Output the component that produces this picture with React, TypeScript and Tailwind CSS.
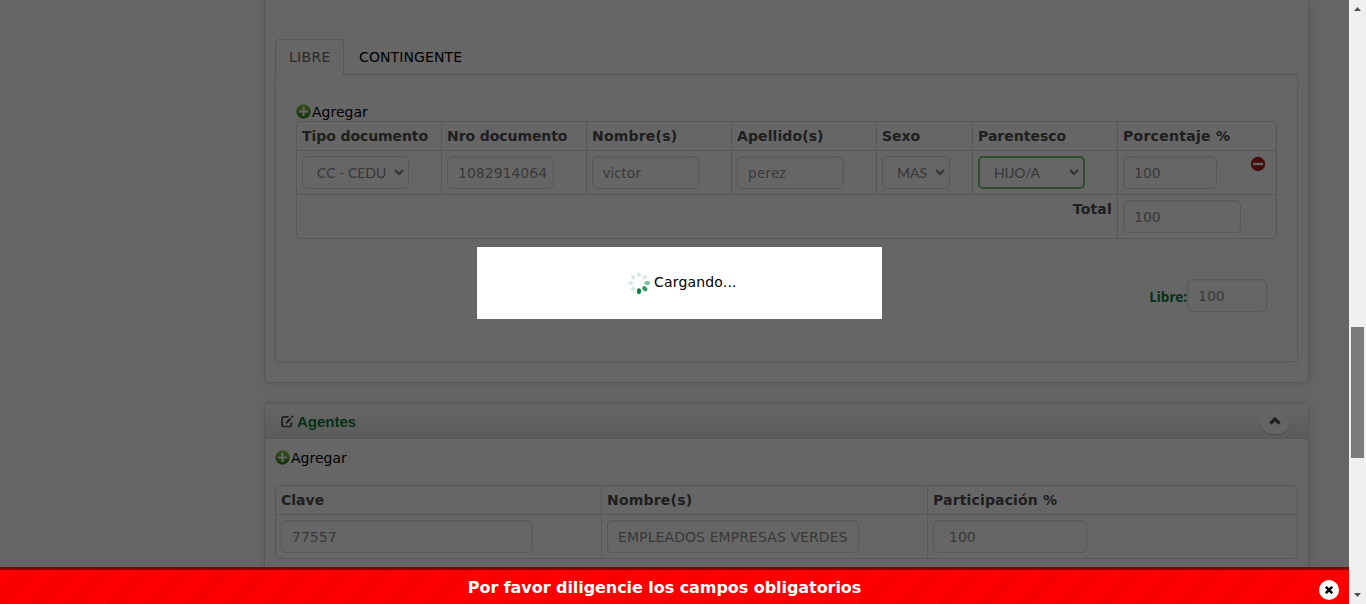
import React from "react";

const inputBase =
  "flex h-[33px] items-center overflow-hidden whitespace-nowrap rounded-[5px] border border-[#dcdcdc] bg-white text-[14px] text-[#8f8f8f] shadow-[inset_0_1px_2px_rgba(0,0,0,0.09)]";

function Field({ value, className = "", textClass = "pt-[2px]" }: { value: string; className?: string; textClass?: string }) {
  return (
    <div className={`${inputBase} ${className}`}>
      <span className={textClass}>{value}</span>
    </div>
  );
}

function Select({ value, className = "", textClass = "" }: { value: string; className?: string; textClass?: string }) {
  return (
    <div
      className={`flex h-[33px] items-center justify-between overflow-hidden whitespace-nowrap rounded-[5px] bg-white pl-[14px] pr-1 font-['Lato',sans-serif] text-[14px] text-[#8a8a8a] ${className}`}
    >
      <span className={textClass}>{value}</span>
      <svg width="10" height="7" viewBox="0 0 10 7" fill="none" stroke="#808080" strokeWidth="2" className="-mt-px">
        <path d="M1 1l4 4 4-4" />
      </svg>
    </div>
  );
}

function AddLink({ id }: { id: string }) {
  return (
    <div className="flex h-[18px] items-center text-[14px] text-black">
      <svg width="16" height="16" viewBox="0 0 16 16">
        <defs>
          <linearGradient id={id} x1="0" y1="0" x2="0" y2="1">
            <stop offset="0" stopColor="#8ccb4c" />
            <stop offset="1" stopColor="#287f1e" />
          </linearGradient>
        </defs>
        <circle cx="7.5" cy="7.5" r="7.2" fill={`url(#${id})`} />
        <path d="M7.5 3v9M3 7.5h9" stroke="#fff" strokeWidth="2.2" />
      </svg>
      <span>Agregar</span>
    </div>
  );
}

const head = "px-[5px] pt-[5px] text-[14px] leading-[18px] font-bold text-[#4e4e4e] whitespace-nowrap";
const line = "border-[#dcdcdc]";

const heads = [
  ["Tipo documento", "tracking-[-0.08px]"],
  ["Nro documento", "tracking-[-0.08px]"],
  ["Nombre(s)", "tracking-[0.2px]"],
  ["Apellido(s)", "tracking-[0.1px]"],
  ["Sexo", ""],
  ["Parentesco", ""],
  ["Porcentaje %", "tracking-[0.28px]"],
];

function Beneficiaries() {
  return (
    <div className={`w-[981px] rounded-[4px] border ${line}`}>
      <div className="grid grid-cols-[144px_145px_145px_145px_96px_145px_159px]">
        {heads.map(([h, t], i) => (
          <div key={h} className={`h-[28px] ${head} ${i ? "border-l" : ""} ${line}`}>
            <span className={t}>{h}</span>
          </div>
        ))}
      </div>
      <div className={`grid h-[44px] grid-cols-[144px_145px_145px_145px_96px_145px_159px] border-t ${line} [&>*]:px-[5px] [&>*]:pt-[5px]`}>
        <div>
          <Select value="CC - CEDU" className="w-[107px] border border-[#dcdcdc]" />
        </div>
        <div className={`border-l ${line}`}>
          <Field value="1082914064" className="w-[107px] pl-[10px]" />
        </div>
        <div className={`border-l ${line}`}>
          <Field value="victor" className="w-[107px] pl-[10px]" textClass="font-['Noto_Sans',sans-serif] tracking-[0.3px]" />
        </div>
        <div className={`border-l ${line}`}>
          <Field value="perez" className="w-[107px] pl-[10px]" textClass="font-['Noto_Sans',sans-serif] tracking-[0.4px]" />
        </div>
        <div className={`border-l ${line}`}>
          <Select value="MAS" className="w-[68px] border border-[#dcdcdc]" />
        </div>
        <div className={`border-l ${line}`}>
          <Select value="HIJO/A" className="w-[107px] border-2 border-[#77c377]" textClass="tracking-[-0.1px]" />
        </div>
        <div className={`flex border-l ${line}`}>
          <Field value="100" className="w-[94px] pl-[10px]" />
          <svg width="16" height="16" viewBox="0 0 16 16" className="ml-[33px]">
            <circle cx="8" cy="8" r="7.2" fill="#a91d18" />
            <path d="M3 8h10" stroke="#fff" strokeWidth="2.4" />
          </svg>
        </div>
      </div>
      <div className={`grid h-[44px] grid-cols-[820px_159px] border-t ${line}`}>
        <div className={`${head} text-right`}>
          <span className="tracking-[0.2px]">Total</span>
        </div>
        <div className={`border-l px-[5px] pt-[5px] ${line}`}>
          <Field value="100" className="w-[118px] pl-[10px]" />
        </div>
      </div>
    </div>
  );
}

function Agents() {
  return (
    <div className={`h-[74px] w-[1023px] rounded-[4px] border ${line}`}>
      <div className="grid h-[28px] grid-cols-[325px_326px_370px]">
        <div className={head}>Clave</div>
        <div className={`border-l ${line} ${head}`}>
          <span className="tracking-[0.2px]">Nombre(s)</span>
        </div>
        <div className={`border-l ${line} ${head}`}>
          <span className="tracking-[0.15px]">Participación %</span>
        </div>
      </div>
      <div className={`grid h-[44px] grid-cols-[325px_326px_370px] border-t ${line} [&>*]:px-[5px] [&>*]:pt-[5px]`}>
        <div>
          <Field value="77557" className="w-[252px] pl-[10px]" />
        </div>
        <div className={`border-l ${line}`}>
          <Field value="EMPLEADOS EMPRESAS VERDES" className="w-[252px] pl-[10px]" textClass="pt-[2px] tracking-[0.09px]" />
        </div>
        <div className={`border-l ${line}`}>
          <Field value="100" className="w-[154px] pl-[15px]" />
        </div>
      </div>
    </div>
  );
}

const petals = ["#d3eadd", "#d3eadd", "#7cc09a", "#359a62", "#128040", "#d3eadd", "#d3eadd", "#d3eadd"];

function Loading() {
  return (
    <div className="absolute left-[477px] top-[247px] flex h-[72px] w-[405px] bg-white pl-[151px] pt-[25px]">
      <svg width="22" height="22" viewBox="-11 -11 22 22">
        {petals.map((c, i) => (
          <ellipse key={i} cx="0" cy="-8.2" rx={i > 1 && i < 5 ? 2.1 : 1.9} ry={i > 1 && i < 5 ? 2.9 : 2.4} fill={c} transform={`rotate(${i * 45})`} />
        ))}
      </svg>
      <span className="ml-[4px] mt-px text-[14px] leading-[18px] tracking-[0.18px] text-black">Cargando...</span>
    </div>
  );
}

function Scrollbar() {
  return (
    <div className="flex h-full w-[17px] shrink-0 flex-col items-center bg-[#f0f0f0]">
      <svg width="17" height="17" viewBox="0 0 17 17" className="shrink-0">
        <path d="M5 11h7L8.5 7z" fill="#505050" />
      </svg>
      <div className="mt-[310px] h-[131px] w-[13px] bg-[#7b7b7b]" />
      <svg width="17" height="17" viewBox="0 0 17 17" className="mt-auto shrink-0">
        <path d="M5 6h7L8.5 10z" fill="#505050" />
      </svg>
    </div>
  );
}

export default function App() {
  return (
    <div className="flex h-[604px] w-[1366px] overflow-hidden bg-[#fcfcfc] font-[Verdana,'DejaVu_Sans',sans-serif]">
      <div className="relative h-full w-[1349px] shrink-0 overflow-hidden">
        <div className="flex w-full flex-col pl-[264px]">
          <section className="h-[383px] w-[1045px] rounded-b-[4px] border border-t-0 border-[#d9d9d9] bg-white pl-[10px] pt-[39px] shadow-[0_0_10px_rgba(0,0,0,0.1)]">
            <div className="flex h-[36px] w-[1023px]">
              <div className="flex w-[69px] items-center rounded-t-[4px] border border-b-0 border-[#dcdcdc] pl-[13px] text-[14px] tracking-[0.3px] text-[#6c6c6c]">
                LIBRE
              </div>
              <div className="flex flex-1 items-center border-b border-[#dcdcdc] pl-[15px] pt-[2px] text-[14px] tracking-[0.1px] text-black">
                CONTINGENTE
              </div>
            </div>
            <div className="h-[287px] w-[1023px] rounded-b-[4px] border border-t-0 border-[#dcdcdc] pl-[20px] pt-[28px] shadow-[0_3px_5px_rgba(0,0,0,0.05)]">
              <AddLink id="addBeneficiary" />
              <Beneficiaries />
              <div className="mt-[40px] flex w-[971px] items-center justify-end">
                <span className="pt-[3px] font-['Noto_Sans',sans-serif] text-[13.5px] font-bold text-[#0c7a3a]">Libre:</span>
                <Field value="100" className="w-[80px] pl-[10px]" />
              </div>
            </div>
          </section>

          <section className="mt-[20px] h-[260px] w-[1045px] rounded-t-[4px] border border-[#d9d9d9] bg-white shadow-[0_0_10px_rgba(0,0,0,0.1)]">
            <header className="flex h-[35px] items-center border-b border-[#dcdcdc] bg-linear-to-b from-white to-[#e4e4e4] pl-[16px] pr-[18px]">
              <svg width="13" height="13" viewBox="0 0 13 13" fill="none" stroke="#4a4a4a">
                <path d="M7.5 1.9H3.2Q1 1.9 1 4v5.4q0 2.1 2.2 2.1h5q2.2 0 2.2-2.1V7.6" strokeWidth="1.7" />
                <path d="M5 8.2L9.6 3.4" strokeWidth="2" />
                <path d="M10.6 2.4l1.4-1.4" strokeWidth="2" />
              </svg>
              <h2 className="ml-[3px] flex-1 pt-[2px] font-['Liberation_Sans',sans-serif] text-[15px] font-bold text-[#0c7a3a]">Agentes</h2>
              <div className="flex h-[25px] w-[30px] items-center justify-center rounded-full bg-[#fcfcfc] shadow-[0_1px_1px_rgba(0,0,0,0.25)]">
                <svg width="12" height="8" viewBox="0 0 12 8" fill="none" stroke="#505050" strokeWidth="3.2">
                  <path d="M1.4 6.6L6 2l4.6 4.6" />
                </svg>
              </div>
            </header>
            <div className="pl-[10px] pt-[10px]">
              <AddLink id="addAgent" />
              <div className="mt-[18px]">
                <Agents />
              </div>
            </div>
          </section>
        </div>

        <div className="absolute inset-0 bg-black/60" />
        <Loading />
        <div className="absolute bottom-0 left-0 flex h-[37px] w-full items-center justify-center border-t-[3px] border-[#8b0000] bg-[repeating-linear-gradient(135deg,#ff0000_0px,#ff0000_14px,#f90000_14px,#f90000_28px)] pr-[20px] pt-px text-[16px] font-bold text-white">
          <span className="tracking-[-0.06px]">Por favor diligencie los campos obligatorios</span>
          <button className="absolute right-[10px] top-[10px] flex h-[20px] w-[20px] items-center justify-center rounded-full bg-white">
            <svg width="8" height="8" viewBox="0 0 8 8" stroke="#000" strokeWidth="2.5">
              <path d="M.8.8l6.4 6.4M7.2.8L.8 7.2" />
            </svg>
          </button>
        </div>
      </div>
      <Scrollbar />
    </div>
  );
}
